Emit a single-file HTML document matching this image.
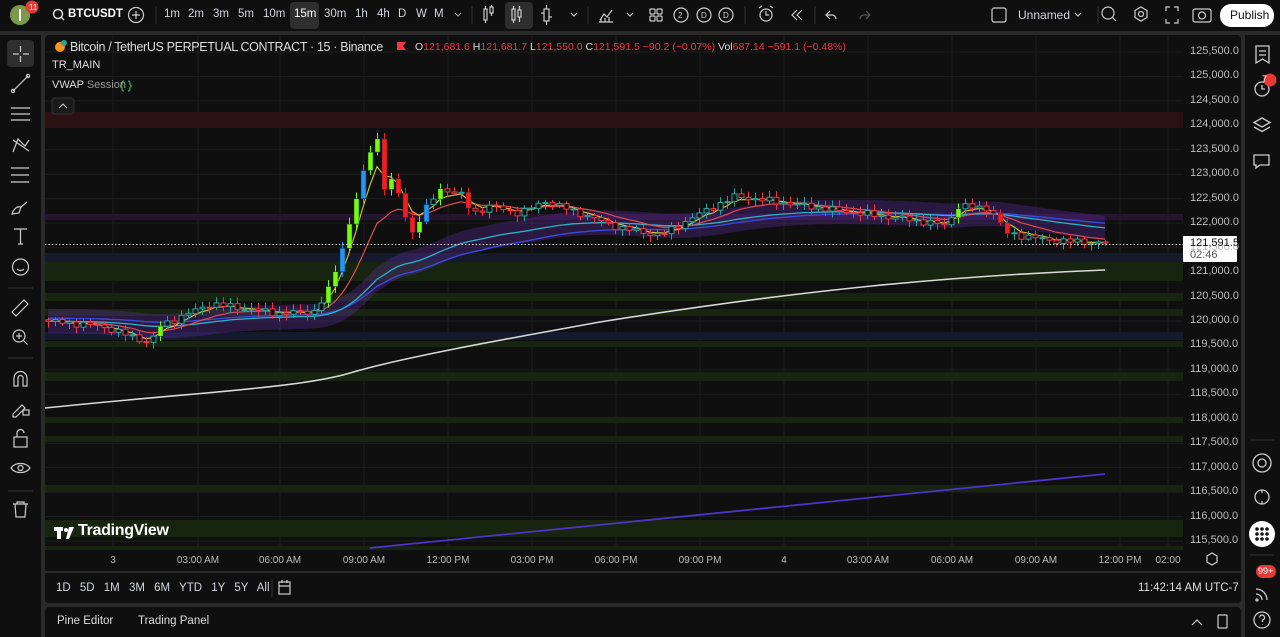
<!DOCTYPE html>
<html><head><meta charset="utf-8">
<style>
*{box-sizing:border-box;margin:0;padding:0}
body{width:1280px;height:637px;background:#2a2a2a;font-family:"Liberation Sans",sans-serif;color:#d1d4dc;overflow:hidden;position:relative}
.top{position:absolute;left:0;top:0;width:1280px;height:31px;background:#0f0f0f}
.left{position:absolute;left:0;top:35px;width:41px;height:602px;background:#0f0f0f}
.main{position:absolute;left:45px;top:35px;width:1196px;height:568px;background:#0f0f0f;border-radius:4px;overflow:hidden}
.right{position:absolute;left:1245px;top:35px;width:35px;height:602px;background:#0f0f0f}
.bottom{position:absolute;left:45px;top:607px;width:1196px;height:30px;background:#0f0f0f;border-radius:4px 4px 0 0}
.t{position:absolute;font-size:12px;white-space:nowrap}
svg{position:absolute;left:0;top:0}
</style></head><body>
<div class="top"></div><div class="left"></div><div class="main"></div><div class="right"></div><div class="bottom"></div>

<svg width="1280" height="637" id="ch">
<g id="grid" stroke="#1d1d1d" stroke-width="1"></g>
<g id="zones"></g>
<g id="lines"></g>
<g id="candles"></g>
<line x1="45" y1="244.5" x2="1183" y2="244.5" stroke="#ddd" stroke-width="1" stroke-dasharray="1.5,2"/>
<path d="M45 408 C200 392 300 388 350 373 C400 358 500 340 600 322 C800 290 950 276 1105 270" stroke="#d8d8d8" stroke-width="1.6" fill="none"/>
<path d="M370 548 L1105 474" stroke="#4a35c8" stroke-width="1.8" fill="none"/>
<rect x="1183" y="236" width="54" height="26" fill="#fff" rx="1"/>
<circle cx="20" cy="15" r="10" fill="#7a9a4a"/><rect x="19" y="9" width="2" height="12" fill="#fff"/>
<circle cx="32" cy="7" r="6.5" fill="#e53935"/>
<circle cx="58" cy="14" r="4.5" stroke="#ddd" stroke-width="1.5" fill="none"/><line x1="61" y1="17" x2="64" y2="20" stroke="#ddd" stroke-width="1.5"/>
<circle cx="136" cy="15" r="7.5" stroke="#ccc" stroke-width="1.2" fill="none"/><path d="M132 15h8M136 11v8" stroke="#ccc" stroke-width="1.2"/>
<line x1="156" y1="6" x2="156" y2="24" stroke="#333"/>
<rect x="290" y="2" width="29" height="27" rx="4" fill="#2e2e2e"/>
<path d="M455 13l3 3 3-3" stroke="#aaa" fill="none"/>
<line x1="472" y1="6" x2="472" y2="24" stroke="#333"/>
<rect x="505" y="2" width="28" height="27" rx="4" fill="#2e2e2e"/>
<g stroke="#ccc" fill="none" stroke-width="1.2">
<rect x="484" y="9" width="3" height="11"/><rect x="490" y="7" width="3" height="6"/><path d="M485.5 6v3M485.5 20v3M491.5 5v2M491.5 13v3"/>
<rect x="512" y="9" width="3" height="11"/><rect x="518" y="10" width="3" height="7"/><path d="M513.5 6v3M513.5 20v3M519.5 6v4M519.5 17v5"/>
<rect x="544" y="9" width="5" height="12"/><path d="M546.5 5v4M546.5 21v4M541 13h3M549 17h3"/>
<path d="M571 13l3 3 3-3"/><path d="M599 22h14M600 20l4-6 3 3 5-7M601 22v-3M605 22v-4M609 22v-5"/>
<path d="M627 13l3 3 3-3"/>
<rect x="650" y="9" width="5" height="5" rx="1"/><rect x="657" y="9" width="5" height="5" rx="1"/><rect x="650" y="16" width="5" height="5" rx="1"/><rect x="657" y="16" width="5" height="5" rx="1"/>
<circle cx="681" cy="15" r="7"/><circle cx="704" cy="15" r="7"/><circle cx="726" cy="15" r="7"/>
<circle cx="766" cy="15" r="6"/><path d="M766 11v4h3M759 8l3-2M773 8l-3-2"/>
<path d="M797 10l-5 5 5 5M802 10l-5 5 5 5"/>
<path d="M830 11l-4 4 4 4M826 15h6a4 4 0 0 1 4 4"/>
<path d="M866 11l4 4-4 4M870 15h-6a4 4 0 0 0-4 4" stroke="#555"/>
<rect x="992" y="8" width="14" height="14" rx="2"/><path d="M1075 13l3 3 3-3"/>
<circle cx="1108" cy="13" r="6"/><path d="M1112 17l4 4"/>
<path d="M1141 7l6 3.5v7l-6 3.5-6-3.5v-7z"/><circle cx="1141" cy="14" r="2.5"/>
<path d="M1166 11v-4h4M1178 11v-4h-4M1166 19v4h4M1178 19v4h-4"/>
<rect x="1193" y="9" width="18" height="13" rx="2"/><circle cx="1202" cy="15.5" r="3.5"/>
</g>
<line x1="588" y1="6" x2="588" y2="24" stroke="#333"/><line x1="745" y1="6" x2="745" y2="24" stroke="#333"/><line x1="815" y1="6" x2="815" y2="24" stroke="#333"/><line x1="1098" y1="6" x2="1098" y2="24" stroke="#333"/>
<rect x="1220" y="4" width="54" height="23" rx="11" fill="#fff"/>
<rect x="7" y="40" width="27" height="27" rx="4" fill="#2e2e2e"/>
<g stroke="#ccc" fill="none" stroke-width="1.2">
<path d="M20.5 46v6M20.5 56v6M13 54h6M23 54h6"/>
<path d="M13 91l15-15"/><circle cx="13" cy="91" r="1.6"/><circle cx="28" cy="76" r="1.6"/>
<path d="M11 108h19M11 114h19M11 120h19"/>
<path d="M13 152l5-13 7 7 4-6M13 140l16 11"/>
<path d="M11 168h18M11 175h18M11 182h18"/>
<path d="M12 214c2-6 6-8 9-7l-2 6zM21 207l6-5"/>
<path d="M14 229h13M20.5 229v15M18 244h5"/>
<circle cx="20.5" cy="267" r="8"/><path d="M17 269c2 2 5 2 7 0"/>
<path d="M12 312l12-12 4 4-12 12z"/>
<circle cx="19" cy="336" r="6"/><path d="M23.5 340.5l4 4M16 336h6M19 333v6"/>
<path d="M14 386v-8a6.5 6.5 0 0 1 13 0v8h-4v-8a2.5 2.5 0 0 0-5 0v8z"/>
<path d="M13 414l9-9 3 3-9 9h-3z"/><rect x="23" y="410" width="6" height="5"/>
<rect x="14" y="437" width="13" height="10"/><path d="M17 437v-4a3.5 3.5 0 0 1 7 0"/>
<path d="M11 468c4-6 15-6 19 0c-4 6-15 6-19 0z"/><circle cx="20.5" cy="468" r="2.5"/>
<path d="M13 504h15M17 504v-2h7v2M15 504l1 13h9l1-13"/>
</g>
<path d="M8 288h25M8 358h25M8 491h25" stroke="#333"/>
<g stroke="#ccc" fill="none" stroke-width="1.3">
<path d="M1256 46h13v17l-6.5-4-6.5 4z"/><path d="M1259 51h7M1259 55h7"/>
<circle cx="1262" cy="89" r="7"/><path d="M1262 85v4h3"/>
<path d="M1262 118l8 4.5-8 4.5-8-4.5zM1254 127l8 4.5 8-4.5"/>
<path d="M1254 155h15v10h-9l-4 3v-3h-2z"/>
<circle cx="1262" cy="463" r="9"/><circle cx="1262" cy="463" r="4"/>
<circle cx="1262" cy="497" r="7"/><path d="M1262 490v3M1262 501v3"/>
<path d="M1256 589a11 11 0 0 1 11 11M1256 594a6 6 0 0 1 6 6"/><circle cx="1257" cy="600" r="1"/>
<circle cx="1262" cy="620" r="8"/><path d="M1259.5 617.5a2.5 2.5 0 1 1 3 2.5v2M1262.5 624.5v0.5"/>
</g>
<circle cx="1262" cy="534" r="13" fill="#fff"/>
<g fill="#111"><circle cx="1257" cy="529" r="1.8"/><circle cx="1262" cy="529" r="1.8"/><circle cx="1267" cy="529" r="1.8"/><circle cx="1257" cy="534" r="1.8"/><circle cx="1262" cy="534" r="1.8"/><circle cx="1267" cy="534" r="1.8"/><circle cx="1257" cy="539" r="1.8"/><circle cx="1262" cy="539" r="1.8"/><circle cx="1267" cy="539" r="1.8"/></g>
<circle cx="1270" cy="80" r="6.5" fill="#e53935"/>
<rect x="1256" y="565" width="20" height="13" rx="6.5" fill="#e53935"/>
<path d="M1250 555h24" stroke="#333"/><path d="M1250 440h24" stroke="#333"/>
<circle cx="60" cy="47" r="5" fill="#f7931a"/><circle cx="64" cy="43" r="3" fill="#26a69a"/>
<path d="M397 42h9l-3 4 3 4h-9z" fill="#f23645"/>
<rect x="52" y="98" width="22" height="16" rx="3" fill="#1a1a1a" stroke="#333"/><path d="M59 108l4-4 4 4" stroke="#ccc" fill="none"/>
<path d="M124 81c-2 0-2 1-2 3s-1 2-2 2c1 0 2 0 2 2s0 3 2 3M128 81c2 0 2 1 2 3s1 2 2 2c-1 0-2 0-2 2s0 3-2 3" stroke="#26a65a" fill="none" stroke-width="1.3"/>
<path d="M45 572h1196" stroke="#2a2a2a" stroke-width="2"/>
<line x1="272" y1="579" x2="272" y2="597" stroke="#333"/>
<g stroke="#ccc" fill="none" stroke-width="1.2"><rect x="279" y="582" width="11" height="12"/><path d="M279 586h11M282 580v3M287 580v3"/>
<path d="M1207 556l5-3 5 3v6l-5 3-5-3z"/>
<path d="M1192 625l5-5 5 5"/><rect x="1218" y="615" width="9" height="13" rx="1"/></g>
<g fill="#fff"><rect x="54" y="527" width="9" height="4"/><rect x="57" y="527" width="4" height="12"/><circle cx="66" cy="530" r="2"/><path d="M69 527h5l-5 12h-3z"/></g>
</svg>

<div class="t" style="left:29px;top:3px;font-size:8px;color:#fff">11</div>
<div class="t" style="left:68px;top:8px;font-weight:bold;color:#fff;font-size:11.5px">BTCUSDT</div>
<div class="t" style="left:164px;top:8px;font-size:11.5px">1m</div>
<div class="t" style="left:188px;top:8px;font-size:11.5px">2m</div>
<div class="t" style="left:213px;top:8px;font-size:11.5px">3m</div>
<div class="t" style="left:238px;top:8px;font-size:11.5px">5m</div>
<div class="t" style="left:263px;top:8px;font-size:11.5px">10m</div>
<div class="t" style="left:294px;top:8px;color:#fff;font-size:11.5px">15m</div>
<div class="t" style="left:324px;top:8px;font-size:11.5px">30m</div>
<div class="t" style="left:355px;top:8px;font-size:11.5px">1h</div>
<div class="t" style="left:377px;top:8px;font-size:11.5px">4h</div>
<div class="t" style="left:398px;top:8px;font-size:11.5px">D</div>
<div class="t" style="left:416px;top:8px;font-size:11.5px">W</div>
<div class="t" style="left:434px;top:8px;font-size:11.5px">M</div>
<div class="t" style="left:678px;top:11px;font-size:8px">2</div>
<div class="t" style="left:701px;top:11px;font-size:8px">D</div>
<div class="t" style="left:723px;top:11px;font-size:8px">D</div>
<div class="t" style="left:1018px;top:8px">Unnamed</div>
<div class="t" style="left:1230px;top:8px;color:#111;font-size:12px">Publish</div>

<div class="t" style="left:70px;top:40px;font-size:12.5px;letter-spacing:-0.35px;color:#ddd">Bitcoin / TetherUS PERPETUAL CONTRACT · 15 · Binance</div>
<div class="t" style="left:415px;top:41px;font-size:10.5px;color:#ddd">O<span style="color:#f23645">121,681.6</span> H<span style="color:#f23645">121,681.7</span> L<span style="color:#f23645">121,550.0</span> C<span style="color:#f23645">121,591.5 −90.2 (−0.07%)</span> Vol<span style="color:#f23645">687.14 −591.1 (−0.48%)</span></div>
<div class="t" style="left:52px;top:59px;font-size:11px;color:#ddd">TR_MAIN</div>
<div class="t" style="left:52px;top:79px;font-size:11px;color:#ddd">VWAP <span style="color:#999">Session</span></div>
<div class="t" style="left:78px;top:522px;font-size:16px;color:#fff;font-weight:bold;letter-spacing:-0.3px">TradingView</div>
<div id="plabels"></div>
<div class="t" style="left:1190px;top:237px;font-size:11px;color:#111">121,591.5</div>
<div class="t" style="left:1190px;top:249px;font-size:11px;color:#555">02:46</div>
<div id="tlabels"></div>
<div class="t" style="left:56px;top:582px;font-size:11.5px;word-spacing:6px">1D 5D 1M 3M 6M YTD 1Y 5Y All</div>
<div class="t" style="left:1138px;top:582px;font-size:11.5px;color:#ddd">11:42:14 AM UTC-7</div>
<div class="t" style="left:57px;top:615px;font-size:11.5px;color:#ddd">Pine Editor</div>
<div class="t" style="left:138px;top:615px;font-size:11.5px;color:#ddd">Trading Panel</div>
<div class="t" style="left:1262px;top:74px;font-size:9px;color:#fff">7</div>
<div class="t" style="left:1258px;top:566px;font-size:9px;color:#fff">99+</div>

<script>
var NS="http://www.w3.org/2000/svg";
function Y(p){return 52+(125500-p)*0.0489;}
function el(g,tag,a){var e=document.createElementNS(NS,tag);for(var k in a)e.setAttribute(k,a[k]);document.getElementById(g).appendChild(e);return e;}
var pl="";
for(var p=125500;p>=115500;p-=500){var y=Y(p);el("grid","line",{x1:45,x2:1183,y1:y,y2:y});
pl+='<div class="t" style="left:1190px;top:'+(y-7)+'px;font-size:11px;color:#bbb">'+(p/1000).toFixed(3).replace('.',',')+'.0</div>';}
document.getElementById("plabels").innerHTML=pl;
var tl=[[113,"3"],[198,"03:00 AM"],[280,"06:00 AM"],[364,"09:00 AM"],[448,"12:00 PM"],[532,"03:00 PM"],[616,"06:00 PM"],[700,"09:00 PM"],[784,"4"],[868,"03:00 AM"],[952,"06:00 AM"],[1036,"09:00 AM"],[1120,"12:00 PM"],[1168,"02:00"]];
var th="";tl.forEach(function(t){el("grid","line",{x1:t[0],x2:t[0],y1:35,y2:548});
th+='<div class="t" style="left:'+(t[0]-40)+'px;width:80px;text-align:center;top:555px;font-size:10px;color:#bbb">'+t[1]+'</div>';});
document.getElementById("tlabels").innerHTML=th;
[[112,128,"#2a1214"],[214,220,"#24142e"],[253,262,"#141a2b"],[262,281,"#17240f"],[293,301,"#17240f"],[309,316,"#17240f"],[332,340,"#141a2b"],[341,347,"#17240f"],[372,381,"#17240f"],[417,423,"#17240f"],[436,442,"#17240f"],[485,492,"#17240f"],[520,537,"#17240f"],[546,550,"#17240f"]].forEach(function(z){el("zones","rect",{x:45,y:z[0],width:1138,height:z[1]-z[0],fill:z[2]});});
var K=[[45,120000],[100,119900],[150,119550],[160,119900],[210,120350],[280,120150],[315,120200],[330,120700],[345,121700],[360,122800],[370,123500],[380,123800],[386,122200],[392,123000],[402,122300],[412,121800],[422,122200],[440,122700],[460,122600],[472,122200],[490,122350],[520,122200],[545,122450],[580,122200],[620,121900],[660,121750],[700,122200],[735,122550],[790,122400],[840,122250],[900,122100],[948,121950],[955,122350],[990,122300],[1005,121800],[1050,121650],[1105,121590]];
function interp(x){for(var i=1;i<K.length;i++)if(x<=K[i][0]){var a=K[i-1],b=K[i];return a[1]+(b[1]-a[1])*(x-a[0])/(b[0]-a[0]);}return K[K.length-1][1];}
var N=152,cl=[],xs=[];
for(var i=0;i<N;i++){var x=48+i*7;xs.push(x);cl.push(interp(x)+Math.sin(i*2.7)*45+Math.sin(i*1.3)*30);}
var prev=cl[0]+30;
for(var i=0;i<N;i++){var o=prev,c=cl[i],hi=Math.max(o,c)+40+Math.abs(Math.sin(i*3.1))*90,lo=Math.min(o,c)-40-Math.abs(Math.cos(i*2.3))*90;
var up=c>=o,big=Math.abs(c-o)>180,col=up?"#26a69a":"#f23645",fill="none";
if(big)fill=up?"#76ff03":"#ff1a1a";if(big&&up&&i%3==0){fill="#2196f3";}
var yt=Y(Math.max(o,c)),yb=Y(Math.min(o,c));
el("candles","line",{x1:xs[i]+0.5,x2:xs[i]+0.5,y1:Y(hi),y2:Y(lo),stroke:big?fill:col,"stroke-width":1});
el("candles","rect",{x:xs[i]-2,y:yt,width:5,height:Math.max(1,yb-yt),fill:fill=="none"?"#0f0f0f":fill,stroke:big?"#135":col,"stroke-width":big?0.5:1});
prev=c;}
function ema(n){var r=[],a=2/(n+1),v=cl[0];for(var i=0;i<N;i++){v=v+(cl[i]-v)*a;r.push(v);}return r;}
function path(arr,off){var d="";for(var i=0;i<N;i++)d+=(i?"L":"M")+xs[i]+" "+Y(arr[i]+(off||0)).toFixed(1);return d;}
var e5=ema(4),e20=ema(12),e50=ema(40),e60=ema(55);
var d=path(e50,250);for(var i=N-1;i>=0;i--)d+="L"+xs[i]+" "+Y(e50[i]-250).toFixed(1);
el("lines","path",{d:d+"Z",fill:"rgba(110,50,190,0.28)"});
el("lines","path",{d:path(e60,60),stroke:"#3a4ad8","stroke-width":1.4,fill:"none"});
el("lines","path",{d:path(e50),stroke:"#2bb3c8","stroke-width":1.3,fill:"none"});
el("lines","path",{d:path(e20),stroke:"#e04a55","stroke-width":1.2,fill:"none"});
el("lines","path",{d:path(e5),stroke:"#d8c83a","stroke-width":1.1,fill:"none"});
</script>
</body></html>
